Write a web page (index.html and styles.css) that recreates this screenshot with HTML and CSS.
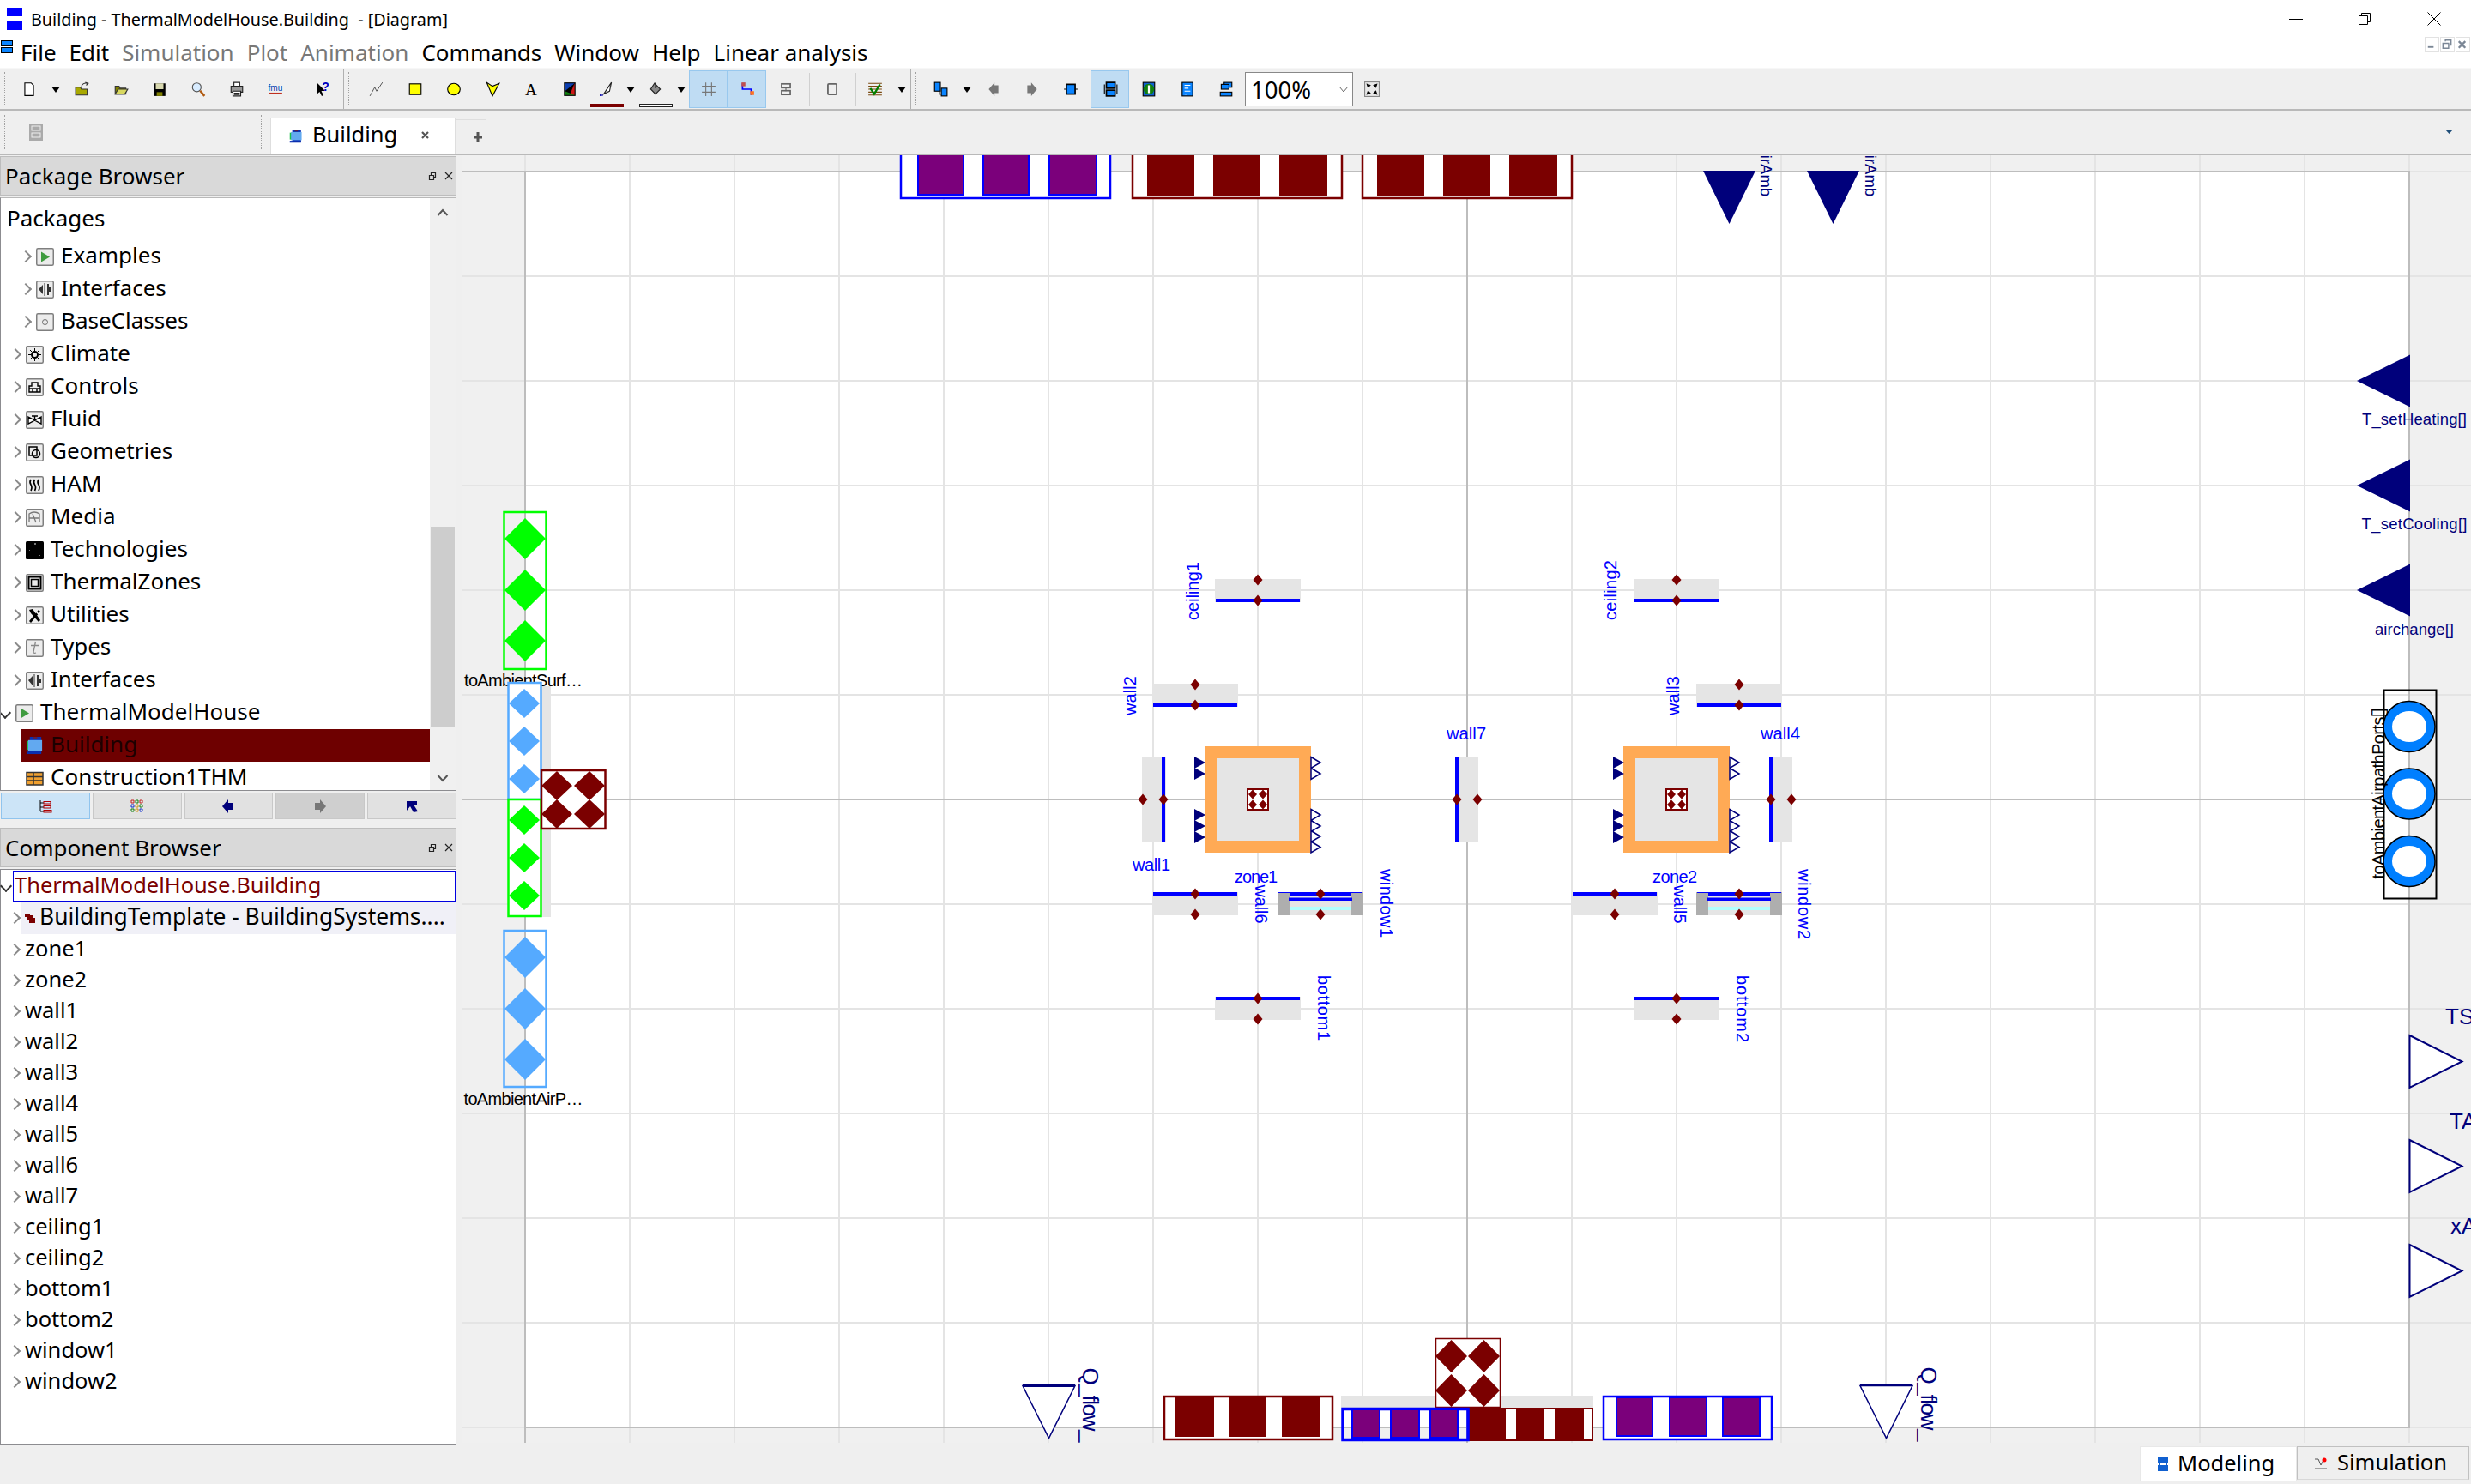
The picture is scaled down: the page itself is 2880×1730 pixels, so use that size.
FILE: index.html
```html
<!DOCTYPE html>
<html lang="en">
<head>
<meta charset="utf-8">
<title>Building - ThermalModelHouse.Building - [Diagram]</title>
<link rel="stylesheet" href="styles.css">
</head>
<body>
<svg class="defs" width="0" height="0" aria-hidden="true">
  <defs>
    <symbol id="t-box" viewBox="0 0 21 21"><rect x=".75" y=".75" width="19.5" height="19.5" rx="1.5" fill="#ececec" stroke="#7f7f7f" stroke-width="1.5"/></symbol>
    <symbol id="t-play" viewBox="0 0 21 21"><use href="#t-box"/><path d="M6 4.5 16 10.5 6 16.5Z" fill="#3f9b3f"/></symbol>
    <symbol id="t-iface" viewBox="0 0 21 21"><use href="#t-box"/><path d="M3 10 8 5V16ZM13 4H15V8H18V13H15V17H13Z" fill="#333"/><path d="M10 3V18" stroke="#333"/></symbol>
    <symbol id="t-base" viewBox="0 0 21 21"><use href="#t-box"/><circle cx="10.5" cy="10.5" r="3" fill="none" stroke="#666"/></symbol>
    <symbol id="t-climate" viewBox="0 0 21 21"><use href="#t-box"/><circle cx="10.5" cy="10.5" r="3.5" fill="none" stroke="#000" stroke-width="2"/><path d="M10.5 3V18M3 10.5H18M5 5 16 16M16 5 5 16" stroke="#000" stroke-dasharray="3 9"/></symbol>
    <symbol id="t-controls" viewBox="0 0 21 21"><use href="#t-box"/><path d="M7 5H14V9H17V16H4V9H7ZM4 12H17M8 12V16H13V12" fill="none" stroke="#000" stroke-width="1.4"/></symbol>
    <symbol id="t-fluid" viewBox="0 0 21 21"><use href="#t-box"/><path d="M3 7 10.500 11 3 15ZM18 7 10.500 11 18 15ZM10.500 11V6M7 6H14" fill="#fff" stroke="#000" stroke-width="1.4"/></symbol>
    <symbol id="t-geom" viewBox="0 0 21 21"><use href="#t-box"/><path d="M4 4H13V14H4Z" fill="none" stroke="#000" stroke-width="1.5"/><circle cx="12" cy="12" r="4.500" fill="none" stroke="#000" stroke-width="1.6"/></symbol>
    <symbol id="t-ham" viewBox="0 0 21 21"><use href="#t-box"/><path d="M6 4Q4 7 6 10T6 17M10.500 4Q8.500 7 10.500 10T10.500 17M15 4Q13 7 15 10T15 17" fill="none" stroke="#000" stroke-width="1.700"/></symbol>
    <symbol id="t-media" viewBox="0 0 21 21"><use href="#t-box"/><path d="M4 16V6Q10 2 16 6V16M4 11H16M8 6 12 16" fill="none" stroke="#777" stroke-width="1.300"/></symbol>
    <symbol id="t-tech" viewBox="0 0 21 21"><rect width="21" height="21" rx="1.500" fill="#000"/><path d="M10 2H12V4H10ZM4 10H5V11H4ZM16 16H17V17H16Z" fill="#777"/></symbol>
    <symbol id="t-thermal" viewBox="0 0 21 21"><use href="#t-box"/><path d="M3.500 3.500H17.500V17.500H3.500Z" fill="none" stroke="#000" stroke-width="2"/><path d="M6.500 6.500H14.500V14.500H6.500Z" fill="none" stroke="#000" stroke-width="1.500"/></symbol>
    <symbol id="t-util" viewBox="0 0 21 21"><use href="#t-box"/><path d="M4 17 15 4 17 6 6 19Z" fill="#000"/><path d="M4 4 8 3 17 16 15 18 6 8Z" fill="#000"/><path d="M12 6 15 9" stroke="#fff" stroke-width="1.500"/></symbol>
    <symbol id="t-type" viewBox="0 0 21 21"><use href="#t-box"/><path d="M11.500 3 9 15Q9 17 12 16M6 7.500H15" fill="none" stroke="#888" stroke-width="1.300"/></symbol>
    <symbol id="t-building" viewBox="0 0 22 22"><rect x="5" y="0" width="14" height="20" fill="#0b2fb0"/><rect x="1" y="5" width="4" height="11" fill="#1cc24a"/><rect x="3" y="4" width="17" height="13" fill="#62a9f0"/><rect x="9" y="0" width="5" height="3" fill="#5a1f4a"/><rect x="1" y="18" width="18" height="3" fill="#0b2fb0"/></symbol>
    <symbol id="t-table" viewBox="0 0 21 21"><path d="M1 3.500H20V18H1Z" fill="#f0a030" stroke="#333" stroke-width="1.500"/><path d="M1 8.500H20M1 13H20M9 4V18" stroke="#333" stroke-width="1.500"/></symbol>

    <polygon id="dm" points="0,-6.500 5.500,0 0,6.500 -5.500,0" fill="#7b0000"/>
    <g id="wall-top"><rect width="100" height="27" fill="#e5e5e5"/><rect x="1" y="23" width="98" height="4" fill="#0000ff"/><use href="#dm" x="50" y="1"/><use href="#dm" x="50" y="25"/></g>
    <g id="wall-bot"><rect width="100" height="27" fill="#e5e5e5"/><rect x="1" y="0" width="98" height="4" fill="#0000ff"/><use href="#dm" x="50" y="2"/><use href="#dm" x="50" y="26"/></g>
    <g id="wall-lft"><rect width="28" height="100" fill="#e5e5e5"/><rect x="23" y="1" width="4" height="98" fill="#0000ff"/><use href="#dm" x="1" y="50"/><use href="#dm" x="25" y="50"/></g>
    <g id="wall-rgt"><rect width="27" height="100" fill="#e5e5e5"/><rect x="0" y="1" width="4" height="98" fill="#0000ff"/><use href="#dm" x="2" y="50"/><use href="#dm" x="26" y="50"/></g>
    <g id="window"><rect width="100" height="27" fill="#e5e5e5"/><rect width="14" height="27" fill="#aeaeae"/><rect x="86" width="14" height="27" fill="#aeaeae"/><rect x="1" y="0" width="98" height="1" fill="#0000ff"/><rect x="14" y="0" width="72" height="4" fill="#0000ff"/><rect x="13" y="6.500" width="74" height="3.500" fill="#0000ff"/><rect x="14" y="17" width="72" height="4" fill="#b0ffff"/><use href="#dm" x="50" y="2"/><use href="#dm" x="50" y="26"/></g>
    <g id="zone">
      <rect width="124" height="124" fill="#ffaa55"/>
      <rect x="14" y="14" width="96" height="96" fill="#e5e5e5"/>
      <rect x="50" y="50" width="24" height="24" fill="#fff" stroke="#7b0000" stroke-width="2"/>
      <path d="M56 50.500 61 56 56 61.500 51 56ZM68 50.500 73 56 68 61.500 63 56ZM56 62.500 61 68 56 73.500 51 68ZM68 62.500 73 68 68 73.500 63 68Z" fill="#7b0000"/>
      <path d="M-12 12 1 19-12 26ZM-12 25 1 32-12 39ZM-12 73 1 80-12 87ZM-12 86 1 93-12 100ZM-12 99 1 106-12 113Z" fill="#00007b"/>
      <path d="M124 12.500 135 19 124 25.500ZM124 25.500 135 32 124 38.500ZM124 73.500 135 80 124 86.500ZM124 86.500 135 93 124 99.500ZM124 98.500 135 105 124 111.500ZM124 111 135 117.500 124 124Z" fill="#fff" stroke="#00007b" stroke-width="1.500"/>
    </g>
    <polygon id="dm-big" points="0,-24 24,0 0,24 -24,0"/>
    <polygon id="dm-mid" points="0,-17 18,0 0,17 -18,0"/>
    <polygon id="tri-out" points="0,0 61,30.500 0,61" fill="#fff" stroke="#00007b" stroke-width="2"/>
    <polygon id="tri-in" points="62,0 0,30.500 62,61" fill="#00007b"/>
    <polygon id="tri-dn" points="0,0 61,0 30.500,62" fill="#00007b"/>
    <polygon id="tri-dnh" points="0,0 61,0 30.500,61" fill="#fff" stroke="#00007b" stroke-width="1.500"/>
    <g id="port-ring"><ellipse rx="30" ry="29.500" fill="#007fff" stroke="#000" stroke-width="1.500"/><ellipse rx="20" ry="18" fill="#fff"/></g>
  </defs>
</svg>

<header class="titlebar">
  <svg class="app-icon" width="20" height="26" viewBox="0 0 20 26"><rect x="1" width="18" height="10" fill="#0000ff"/><rect x="1" y="16" width="18" height="10" fill="#0000ff"/></svg>
  <span class="title-text">Building - ThermalModelHouse.Building  - [Diagram]</span>
  <div class="caption">
    <svg width="16" height="16" viewBox="0 0 16 16"><path d="M0 8.500H16" stroke="#000"/></svg>
    <svg width="16" height="16" viewBox="0 0 16 16"><path d="M1.500 4.500H11.500V14.500H1.500ZM4.500 4.500V1.500H14.500V11.500H11.500" fill="none" stroke="#000"/></svg>
    <svg width="16" height="16" viewBox="0 0 16 16"><path d="M.5 .5 15.500 15.500M15.500 .5 .5 15.500" stroke="#000"/></svg>
  </div>
</header>

<nav class="menubar">
  <svg class="menu-icon" width="14" height="15" viewBox="0 0 14 15"><rect x=".5" y=".5" width="13" height="6" fill="#0a84ff" stroke="#000"/><rect x=".5" y="8.500" width="13" height="6" fill="#0a84ff" stroke="#000"/></svg>
  <ul class="menu">
    <li>File</li><li>Edit</li><li class="off">Simulation</li><li class="off">Plot</li><li class="off">Animation</li><li>Commands</li><li>Window</li><li>Help</li><li>Linear analysis</li>
  </ul>
  <div class="mdi">
    <span class="mdi-btn"><svg width="17" height="17" viewBox="0 0 17 17"><path d="M4 12H11" stroke="#7b8796" stroke-width="2"/></svg></span>
    <span class="mdi-btn"><svg width="17" height="17" viewBox="0 0 17 17"><path d="M3.500 7.500H10.500V13.500H3.500ZM6.500 5V3.500H13.500V9.500H11" fill="none" stroke="#7b8796" stroke-width="1.500"/></svg></span>
    <span class="mdi-btn"><svg width="17" height="17" viewBox="0 0 17 17"><path d="M4 5 12 13M12 5 4 13" stroke="#7b8796" stroke-width="2.500"/></svg></span>
  </div>
</nav>

<div class="toolbar">
  <div class="tb-group g1">
    <i class="grip"></i>
    <span class="tool"><svg class="ic" viewBox="0 0 16 16"><path d="M3.500 1.500H10L12.500 4V14.500H3.500Z" fill="#fff" stroke="#000"/></svg></span>
    <span class="tool arrow"><i class="down"></i></span>
    <span class="tool"><svg class="ic" viewBox="0 0 16 16"><path d="M1 6H6L7 8H13V14H1Z" fill="#a8a800" stroke="#333"/><path d="M7 5Q9 1 13 2M11 1 14 2 12 4" fill="none" stroke="#333"/></svg></span>
    <span class="tool"><svg class="ic" viewBox="0 0 16 16"><path d="M2 5H6L7 7H13V13H2Z" fill="#808000" stroke="#333"/><path d="M5 8H15L12 13H2Z" fill="#d8d860" stroke="#333"/></svg></span>
    <span class="tool"><svg class="ic" viewBox="0 0 16 16"><path d="M2 2H14V15H2Z" fill="#000"/><path d="M4 2H12V8H4Z" fill="#d8d8b0"/><path d="M5 11H11V15H5Z" fill="#808000"/></svg></span>
    <span class="tool"><svg class="ic" viewBox="0 0 16 16"><circle cx="6.500" cy="6" r="4.500" fill="#d8ecff" stroke="#555"/><path d="M10 9.500 14.500 15" stroke="#b05a10" stroke-width="2.200"/></svg></span>
    <span class="tool"><svg class="ic" viewBox="0 0 16 16"><path d="M5 1H11V5H5Z" fill="#fff" stroke="#222"/><path d="M2 5H14V11H2Z" fill="#999" stroke="#222"/><path d="M4 10H12V15H4Z" fill="#fff" stroke="#222"/><path d="M5 12H11M5 13.500H11" stroke="#222"/></svg></span>
    <span class="tool"><svg class="ic" viewBox="0 0 16 16"><text class="fmu" x="8" y="10">fmu</text><path d="M1 12H15" stroke="#c03020"/></svg></span>
    <i class="sep s-a"></i>
    <span class="tool"><svg class="ic" viewBox="0 0 18 18"><path d="M2 1V15L5.500 12 8 17 10 16 7.500 11H12Z" fill="#000"/><text class="qmark" x="12.500" y="11">?</text></svg></span>
  </div>
  <div class="tb-group g2">
    <i class="grip g-b"></i>
    <span class="tool"><svg class="ic" viewBox="0 0 16 16"><path d="M1 15 6 6 8 10 14 1" fill="none" stroke="#444" stroke-width=".8"/></svg></span>
    <span class="tool"><svg class="ic" viewBox="0 0 16 16"><rect x="2" y="2.500" width="12" height="11" fill="#ffff00" stroke="#000"/></svg></span>
    <span class="tool"><svg class="ic" viewBox="0 0 16 16"><ellipse cx="8" cy="8" rx="6.500" ry="6" fill="#ffff00" stroke="#000"/></svg></span>
    <span class="tool"><svg class="ic" viewBox="0 0 16 16"><path d="M2 1 8 5 15 2 8 15Z" fill="#ffff00" stroke="#000"/></svg></span>
    <span class="tool"><svg class="ic" viewBox="0 0 16 16"><text class="aglyph" x="8" y="14">A</text></svg></span>
    <span class="tool"><svg class="ic" viewBox="0 0 16 16"><path d="M2 1H14V15H2Z" fill="#000"/><path d="M3 2H13L3 10Z" fill="#0c3fb0"/><path d="M13 2V14H8Z" fill="#d01818"/><path d="M3 10 13 14H3Z" fill="#108010"/></svg></span>
    <span class="tool paint"><svg class="ic" viewBox="0 0 16 16"><path d="M5 13 9 7 13 1 11 10Z" fill="#fff" stroke="#222"/><path d="M1 14H2M3 14H4" stroke="#0000aa" stroke-width="2"/></svg><i class="swatch red"></i></span>
    <span class="tool arrow a-p"><i class="down"></i></span>
    <span class="tool paint"><svg class="ic" viewBox="0 0 16 16"><path d="M7 2 13 8 8 13 3 8Z" fill="#888" stroke="#222"/><path d="M8 1V7" stroke="#222"/></svg><i class="swatch white"></i></span>
    <span class="tool arrow a-f"><i class="down"></i></span>
    <span class="tool hl"><svg class="ic" viewBox="0 0 16 16"><path d="M5 1V15M11 1V15M1 5H15M1 11H15" stroke="#777"/></svg></span>
    <span class="tool hl"><svg class="ic" viewBox="0 0 16 16"><path d="M3 2V8H12V14" fill="none" stroke="#0000ff" stroke-width="1.500"/><rect x="2" y="1" width="4" height="4" fill="#c05050"/><rect x="11" y="10" width="4" height="4" fill="#ff7020"/></svg></span>
    <span class="tool"><svg class="ic" viewBox="0 0 16 16"><rect x="3.500" y="2.500" width="9" height="4" fill="none" stroke="#666" stroke-width="1.500"/><rect x="3.500" y="9.500" width="9" height="4" fill="none" stroke="#666" stroke-width="1.500"/><path d="M8 6V10" stroke="#666"/></svg></span>
    <i class="sep s-c"></i>
    <span class="tool"><svg class="ic" viewBox="0 0 16 16"><rect x="3.500" y="2.500" width="9" height="11" rx="1" fill="none" stroke="#666" stroke-width="1.600"/></svg></span>
    <i class="sep s-d"></i>
    <span class="tool t-check"><svg class="ic" viewBox="0 0 16 16"><path d="M1 2H15M1 5H15M1 8H15M1 11H15M1 14H15" stroke="#7a4a10"/><path d="M3 7 7 13 13 3" fill="none" stroke="#008000" stroke-width="2"/></svg></span>
    <span class="tool arrow"><i class="down"></i></span>
  </div>
  <div class="tb-group g3">
    <i class="grip g-c"></i>
    <span class="tool"><svg class="ic" viewBox="0 0 16 16"><rect x="2" y="1" width="6" height="9" fill="#0a84ff" stroke="#000"/><rect x="9" y="7" width="6" height="8" fill="#0a84ff" stroke="#000"/><path d="M7 13H9M7 10V13" stroke="#000"/></svg></span>
    <span class="tool arrow"><i class="down"></i></span>
    <span class="tool"><svg class="ic" viewBox="0 0 16 16"><path d="M9 1V4H13V12H9V15L3 8Z" fill="#777"/></svg></span>
    <span class="tool"><svg class="ic" viewBox="0 0 16 16"><path d="M7 1V4H3V12H7V15L13 8Z" fill="#777"/></svg></span>
    <span class="tool t-w"><svg class="ic" viewBox="0 0 16 16"><rect x="3.500" y="3" width="9" height="10" fill="#0a84ff" stroke="#000" stroke-width="1.500"/><path d="M1 8H3M13 8H15" stroke="#000"/></svg></span>
    <span class="tool hl"><svg class="ic" viewBox="0 0 16 16"><rect x="4" y="1" width="9" height="6" fill="#0a84ff" stroke="#000" stroke-width="1.500"/><rect x="4" y="9" width="9" height="6" fill="#0a84ff" stroke="#000" stroke-width="1.500"/><path d="M2 3V13M15 3V13" stroke="#000"/></svg></span>
    <span class="tool"><svg class="ic" viewBox="0 0 16 16"><rect x="2" y="1" width="12" height="14" fill="#1060d0" stroke="#000"/><circle cx="8" cy="8" r="5.500" fill="#108010"/><path d="M7 4H9V12H7Z" fill="#fff"/></svg></span>
    <span class="tool"><svg class="ic" viewBox="0 0 16 16"><rect x="2.500" y="1" width="11" height="14" fill="#0a84ff" stroke="#000"/><path d="M5 4H11M5 7H9M5 10H11M5 13H8" stroke="#fff"/></svg></span>
    <span class="tool"><svg class="ic" viewBox="0 0 16 16"><rect x="6" y="1" width="8" height="5" fill="#0a84ff" stroke="#000"/><rect x="3" y="3" width="8" height="5" fill="#0a84ff" stroke="#000"/><rect x="2" y="11" width="12" height="4" fill="#0a84ff" stroke="#000"/></svg></span>
    <div class="combo"><span>100%</span><svg width="12" height="8" viewBox="0 0 12 8"><path d="M1 1 6 7 11 1" fill="none" stroke="#666"/></svg></div>
    <span class="tool t-fit"><svg class="ic" viewBox="0 0 16 16"><rect x=".5" y=".5" width="15" height="15" fill="#e8e8e8" stroke="#888"/><path d="M3 3 6 4 4 6ZM13 3 10 4 12 6ZM3 13 6 12 4 10ZM13 13 10 12 12 10Z" fill="#000" stroke="#000"/></svg></span>
  </div>
</div>

<div class="tabbar">
  <div class="tab-lead">
    <i class="grip"></i>
    <svg class="lead-icon" width="16" height="20" viewBox="0 0 16 20"><rect x="0" y="0" width="16" height="20" fill="#aaa"/><rect x="3" y="3" width="10" height="5" fill="none" stroke="#eee"/><rect x="3" y="11" width="10" height="5" fill="none" stroke="#eee"/></svg>
  </div>
  <i class="grip g-t"></i>
  <div class="doc-tab">
    <svg width="16" height="22" viewBox="0 0 22 22"><use href="#t-building"/></svg>
    <span>Building</span>
    <svg class="tab-x" width="11" height="11" viewBox="0 0 11 11"><path d="M2 2 9 9M9 2 2 9" stroke="#555" stroke-width="2.200"/></svg>
  </div>
  <div class="plus-tab"><svg width="10" height="14" viewBox="0 0 10 14"><path d="M5 1V13M0 7H10" stroke="#555" stroke-width="3"/></svg></div>
  <svg class="tab-menu" width="9" height="5" viewBox="0 0 9 5"><path d="M0 0H9L4.500 5Z" fill="#1f4e79"/></svg>
</div>

<main class="workspace">
  <aside class="sidebar">
    <section class="panel pkg">
      <h2 class="panel-head">Package Browser
        <span class="panel-ctl"><svg width="10" height="12" viewBox="0 0 10 12"><path d="M1.500 5.500H6.500V10.500H1.500ZM3.500 5V2.500H8.500V7.500H7" fill="none" stroke="#222" stroke-width="1.200"/></svg><svg width="10" height="10" viewBox="0 0 10 10"><path d="M1 1 9 9M9 1 1 9" stroke="#222" stroke-width="1.200"/></svg></span>
      </h2>
      <div class="pkg-box">
        <div class="pkg-tree">
          <div class="tree-head">Packages</div>
          <ul class="tree">
            <li class="row l2"><i class="chev"></i><svg class="ti"><use href="#t-play"/></svg><span>Examples</span></li>
            <li class="row l2"><i class="chev"></i><svg class="ti"><use href="#t-iface"/></svg><span>Interfaces</span></li>
            <li class="row l2"><i class="chev"></i><svg class="ti"><use href="#t-base"/></svg><span>BaseClasses</span></li>
            <li class="row l1"><i class="chev"></i><svg class="ti"><use href="#t-climate"/></svg><span>Climate</span></li>
            <li class="row l1"><i class="chev"></i><svg class="ti"><use href="#t-controls"/></svg><span>Controls</span></li>
            <li class="row l1"><i class="chev"></i><svg class="ti"><use href="#t-fluid"/></svg><span>Fluid</span></li>
            <li class="row l1"><i class="chev"></i><svg class="ti"><use href="#t-geom"/></svg><span>Geometries</span></li>
            <li class="row l1"><i class="chev"></i><svg class="ti"><use href="#t-ham"/></svg><span>HAM</span></li>
            <li class="row l1"><i class="chev"></i><svg class="ti"><use href="#t-media"/></svg><span>Media</span></li>
            <li class="row l1"><i class="chev"></i><svg class="ti"><use href="#t-tech"/></svg><span>Technologies</span></li>
            <li class="row l1"><i class="chev"></i><svg class="ti"><use href="#t-thermal"/></svg><span>ThermalZones</span></li>
            <li class="row l1"><i class="chev"></i><svg class="ti"><use href="#t-util"/></svg><span>Utilities</span></li>
            <li class="row l1"><i class="chev"></i><svg class="ti"><use href="#t-type"/></svg><span>Types</span></li>
            <li class="row l1"><i class="chev"></i><svg class="ti"><use href="#t-iface"/></svg><span>Interfaces</span></li>
            <li class="row l0"><i class="chev open"></i><svg class="ti"><use href="#t-play"/></svg><span>ThermalModelHouse</span></li>
            <li class="row leaf selected"><svg class="ti"><use href="#t-building"/></svg><span>Building</span></li>
            <li class="row leaf"><svg class="ti"><use href="#t-table"/></svg><span>Construction1THM</span></li>
          </ul>
        </div>
        <div class="scroll">
          <svg width="14" height="9" viewBox="0 0 14 9"><path d="M1.500 8 7 2 12.500 8" fill="none" stroke="#555" stroke-width="2"/></svg>
          <i class="thumb"></i>
          <svg width="14" height="9" viewBox="0 0 14 9"><path d="M1.500 1 7 7 12.500 1" fill="none" stroke="#555" stroke-width="2"/></svg>
        </div>
      </div>
      <div class="browser-tabs">
        <span class="btab on"><svg width="16" height="16" viewBox="0 0 16 16"><path d="M2 1V14M2 4H6M2 9H6M2 14H6" fill="none" stroke="#000"/><rect x="6" y="2.500" width="8" height="2.500" fill="none" stroke="#b00000"/><rect x="6" y="7.500" width="8" height="2.500" fill="none" stroke="#b00000"/><rect x="6" y="12.500" width="9" height="2.500" fill="none" stroke="#b00000"/></svg></span>
        <span class="btab"><svg width="16" height="16" viewBox="0 0 16 16"><path d="M1 1H4V4H1ZM11 1H14V4H11Z" fill="none" stroke="#c02020"/><path d="M6 1H9V4H6ZM1 11H4V14H1Z" fill="none" stroke="#108010"/><path d="M1 6H4V9H1ZM11 11H14V14H11Z" fill="none" stroke="#1030d0"/><path d="M6 6H9V9H6ZM6 11H9V14H6Z" fill="none" stroke="#d09010"/><path d="M11 6H14V9H11Z" fill="none" stroke="#108010"/></svg></span>
        <span class="btab"><svg width="14" height="16" viewBox="0 0 14 16"><path d="M7 0V4H13V12H7V16L0 8Z" fill="#00007b"/></svg></span>
        <span class="btab dim"><svg width="14" height="16" viewBox="0 0 14 16"><path d="M7 0V4H1V12H7V16L14 8Z" fill="#777"/></svg></span>
        <span class="btab"><svg width="14" height="14" viewBox="0 0 14 14"><path d="M1 1H13V6L9 5 14 13 9 14 5 7 1 12Z" fill="#00007b"/></svg></span>
      </div>
    </section>
    <section class="panel comp">
      <h2 class="panel-head">Component Browser
        <span class="panel-ctl"><svg width="10" height="12" viewBox="0 0 10 12"><path d="M1.500 5.500H6.500V10.500H1.500ZM3.500 5V2.500H8.500V7.500H7" fill="none" stroke="#222" stroke-width="1.200"/></svg><svg width="10" height="10" viewBox="0 0 10 10"><path d="M1 1 9 9M9 1 1 9" stroke="#222" stroke-width="1.200"/></svg></span>
      </h2>
      <ul class="comp-tree">
        <li class="root"><i class="chev open"></i><span>ThermalModelHouse.Building</span></li>
        <li class="crow base"><i class="chev"></i><svg width="12" height="12" viewBox="0 0 12 12"><path d="M0 1H6V3H10V6H12V12H5V9H2V5H0Z" fill="#7b0000"/></svg><span>BuildingTemplate - BuildingSystems....</span></li>
        <li class="crow"><i class="chev"></i><span>zone1</span></li>
        <li class="crow"><i class="chev"></i><span>zone2</span></li>
        <li class="crow"><i class="chev"></i><span>wall1</span></li>
        <li class="crow"><i class="chev"></i><span>wall2</span></li>
        <li class="crow"><i class="chev"></i><span>wall3</span></li>
        <li class="crow"><i class="chev"></i><span>wall4</span></li>
        <li class="crow"><i class="chev"></i><span>wall5</span></li>
        <li class="crow"><i class="chev"></i><span>wall6</span></li>
        <li class="crow"><i class="chev"></i><span>wall7</span></li>
        <li class="crow"><i class="chev"></i><span>ceiling1</span></li>
        <li class="crow"><i class="chev"></i><span>ceiling2</span></li>
        <li class="crow"><i class="chev"></i><span>bottom1</span></li>
        <li class="crow"><i class="chev"></i><span>bottom2</span></li>
        <li class="crow"><i class="chev"></i><span>window1</span></li>
        <li class="crow"><i class="chev"></i><span>window2</span></li>
      </ul>
    </section>
  </aside>

  <div class="canvas">
    <svg class="diagram" viewBox="538 181 2342 1501" width="2342" height="1501">
      <rect class="bg-out" x="538" y="181" width="2342" height="1501"/>
      <rect class="bg-in" x="612" y="200" width="2196" height="1464"/>
      <path class="grid" d="M734 181V1682M856 181V1682M978 181V1682M1100 181V1682M1222 181V1682M1344 181V1682M1466 181V1682M1588 181V1682M1832 181V1682M1954 181V1682M2076 181V1682M2198 181V1682M2320 181V1682M2442 181V1682M2564 181V1682M2686 181V1682M612 181V200M2808 181V200M2808 1664V1682M538 322H2880M538 444H2880M538 566H2880M538 688H2880M538 810H2880M538 1054H2880M538 1176H2880M538 1298H2880M538 1420H2880M538 1542H2880M538 1664H612M2808 1664H2880M2808 200H2880"/>
      <path class="axis" d="M612 200V1682M1710 181V1682M538 932H2880M538 200H2808V1664H612"/>

      <!-- top connectors -->
      <rect class="frame-b" x="1050" y="120" width="244" height="111"/>
      <rect class="bar-p" x="1070" y="120" width="53" height="107"/><rect class="bar-p" x="1146" y="120" width="53" height="107"/><rect class="bar-p" x="1223" y="120" width="55" height="107"/>
      <rect class="frame-r" x="1320" y="120" width="244" height="111"/>
      <path class="fill-r" d="M1337 120H1392V228H1337ZM1414 120H1469V228H1414ZM1491 120H1547V228H1491Z"/>
      <rect class="frame-r" x="1588" y="120" width="244" height="111"/>
      <path class="fill-r" d="M1605 120H1660V228H1605ZM1682 120H1737V228H1682ZM1759 120H1815V228H1759Z"/>
      <use href="#tri-dn" x="1985" y="199"/><use href="#tri-dn" x="2106" y="199"/>
      <text class="navy l18 c" transform="translate(2058 205) rotate(90)">irAmb</text>
      <text class="navy l18 c" transform="translate(2180 205) rotate(90)">irAmb</text>

      <!-- zones and walls -->
      <use href="#zone" x="1404" y="870"/><use href="#zone" x="1892" y="870"/>
      <use href="#wall-top" x="1416" y="675"/><use href="#wall-top" x="1904" y="675"/>
      <use href="#wall-top" x="1343" y="797"/><use href="#wall-top" x="1977" y="797"/>
      <use href="#wall-bot" x="1343" y="1040"/><use href="#wall-bot" x="1832" y="1040"/>
      <use href="#wall-bot" x="1416" y="1162"/><use href="#wall-bot" x="1904" y="1162"/>
      <use href="#window" x="1489" y="1040"/><use href="#window" x="1977" y="1040"/>
      <use href="#wall-lft" x="1331" y="882"/>
      <use href="#wall-rgt" x="1696" y="882"/><use href="#wall-rgt" x="2062" y="882"/>

      <text class="blue c" textLength="68" transform="translate(1390 689) rotate(-90)">ceiling1</text>
      <text class="blue c" textLength="70" transform="translate(1877 688) rotate(-90)">ceiling2</text>
      <text class="blue c" textLength="46" transform="translate(1317 811) rotate(-90)">wall2</text>
      <text class="blue c" textLength="46" transform="translate(1950 811) rotate(-90)">wall3</text>
      <text class="blue c" textLength="44" x="1342" y="1008">wall1</text>
      <text class="blue c" textLength="46" x="1709" y="855">wall7</text>
      <text class="blue c" textLength="46" x="2075" y="855">wall4</text>
      <text class="blue c" textLength="50" x="1464" y="1022">zone1</text>
      <text class="blue c" textLength="52" x="1952" y="1022">zone2</text>
      <text class="blue c" textLength="45" transform="translate(1470 1054) rotate(90)">wall6</text>
      <text class="blue c" textLength="45" transform="translate(1958 1054) rotate(90)">wall5</text>
      <text class="blue c" textLength="80" transform="translate(1616 1053) rotate(90)">window1</text>
      <text class="blue c" textLength="82" transform="translate(2103 1054) rotate(90)">window2</text>
      <text class="blue c" textLength="76" transform="translate(1543 1175) rotate(90)">bottom1</text>
      <text class="blue c" textLength="78" transform="translate(2031 1176) rotate(90)">bottom2</text>

      <!-- left connectors -->
      <text class="black c" textLength="138" x="610" y="793">toAmbientSurf…</text>
      <text class="black c" textLength="139" x="610" y="1281">toAmbientAirP…</text>
      <rect class="shade" x="631" y="800" width="11" height="269"/>
      <rect class="frame-g" x="587.500" y="597" width="49" height="183"/>
      <g class="lime"><use href="#dm-big" x="612" y="628"/><use href="#dm-big" x="612" y="688"/><use href="#dm-big" x="612" y="747"/></g>
      <rect class="frame-sb" x="592.500" y="796" width="38" height="136"/>
      <g class="sky"><use href="#dm-mid" x="611" y="820"/><use href="#dm-mid" x="611" y="864"/><use href="#dm-mid" x="611" y="908"/></g>
      <rect class="frame-sg" x="592.500" y="932" width="38" height="136"/>
      <g class="lime"><use href="#dm-mid" x="611" y="956"/><use href="#dm-mid" x="611" y="1000"/><use href="#dm-mid" x="611" y="1044"/></g>
      <rect class="frame-dr" x="631" y="898" width="74.500" height="68"/>
      <g class="maroon"><use href="#dm-mid" x="649" y="916"/><use href="#dm-mid" x="687" y="916"/><use href="#dm-mid" x="649" y="949"/><use href="#dm-mid" x="687" y="949"/></g>
      <rect class="frame-b2" x="587.500" y="1085" width="49" height="182"/>
      <g class="sky"><use href="#dm-big" x="612" y="1116"/><use href="#dm-big" x="612" y="1176"/><use href="#dm-big" x="612" y="1235"/></g>

      <!-- right connectors -->
      <use href="#tri-in" x="2747" y="413.500"/><use href="#tri-in" x="2747" y="535.500"/><use href="#tri-in" x="2747" y="657.500"/>
      <text class="navy l18 c" textLength="122" x="2814" y="488">T_setHeating[]</text>
      <text class="navy l18 c" textLength="123" x="2814" y="610">T_setCooling[]</text>
      <text class="navy l18 c" textLength="92" x="2814" y="733">airchange[]</text>
      <rect class="frame-k" x="2778.500" y="804.500" width="61" height="243"/>
      <use href="#port-ring" x="2808" y="847"/><use href="#port-ring" x="2808" y="925.500"/><use href="#port-ring" x="2808" y="1004"/>
      <text class="black c" textLength="199" transform="translate(2772 925) rotate(-90)">toAmbientAirpathPorts[]</text>
      <use href="#tri-out" x="2808.500" y="1207"/><use href="#tri-out" x="2808.500" y="1329"/><use href="#tri-out" x="2808.500" y="1451"/>
      <text class="navy l26" x="2850" y="1194">TS</text>
      <text class="navy l26" x="2855" y="1316">TA</text>
      <text class="navy l26" x="2856" y="1438">xA</text>

      <!-- bottom connectors -->
      <use href="#tri-dnh" x="1192" y="1615.500"/><path class="navy-line" d="M1192 1615.500H1253M2168 1615.500H2229"/><use href="#tri-dnh" x="2168" y="1615.500"/>
      <text class="navy l26b c" textLength="87" transform="translate(1271 1638) rotate(90)">Q_flow_</text>
      <text class="navy l26b c" textLength="87" transform="translate(2248 1637) rotate(90)">Q_flow_</text>
      <rect class="frame-r" x="1357" y="1628" width="196" height="50"/>
      <path class="fill-r" d="M1370 1628H1415V1675H1370ZM1432 1628H1476V1675H1432ZM1494 1628H1538V1675H1494Z"/>
      <rect class="frame-b" x="1869" y="1628" width="196" height="50"/>
      <rect class="bar-p" x="1884" y="1629" width="42" height="45"/><rect class="bar-p" x="1946" y="1629" width="43" height="45"/><rect class="bar-p" x="2008" y="1629" width="43" height="45"/>
      <rect class="shade" x="1563" y="1627" width="294" height="14"/>
      <rect class="frame-thin" x="1673.500" y="1560.500" width="75" height="80"/>
      <path class="fill-r" d="M1691.500 1562 1710 1581 1691.500 1600 1673 1581ZM1729.500 1562 1748 1581 1729.500 1600 1711 1581ZM1691.500 1602 1710 1621 1691.500 1640 1673 1621ZM1729.500 1602 1748 1621 1729.500 1640 1711 1621Z"/>
      <rect class="frame-rs" x="1711" y="1642" width="145" height="37"/>
      <path class="fill-r" d="M1711 1642H1755V1679H1711ZM1767 1642H1800V1679H1767ZM1812 1642H1846V1679H1812Z"/>
      <rect class="frame-bs" x="1565" y="1642.500" width="146" height="36"/>
      <rect class="bar-p" x="1576" y="1643" width="32" height="33"/><rect class="bar-p" x="1621" y="1643" width="33" height="33"/><rect class="bar-p" x="1667" y="1643" width="32" height="33"/>
    </svg>
  </div>
</main>

<footer class="modebar">
  <div class="mode on"><svg width="14" height="18" viewBox="0 0 14 18"><rect x="1" width="12" height="7" fill="#1060d0"/><rect x="1" y="10" width="12" height="7" fill="#1060d0"/><path d="M3 7V10M11 7V10" stroke="#1060d0" stroke-width="2"/></svg><span>Modeling</span></div>
  <div class="mode"><svg width="16" height="16" viewBox="0 0 16 16"><path d="M1 3 5 3 8 10 11 4" fill="none" stroke="#555"/><path d="M1 14H15" stroke="#555"/><circle cx="12" cy="4" r="2.500" fill="#ff0000"/></svg><span>Simulation</span></div>
</footer>
</body>
</html>
```

FILE: styles.css
```css
* { box-sizing: border-box; }
html, body { margin: 0; padding: 0; }
body {
  width: 2880px;
  height: 1730px;
  overflow: hidden;
  background: #efefef;
  color: #000;
  font-family: "Noto Sans", Tahoma, sans-serif;
  font-size: 25.5px;
  display: flex;
  flex-direction: column;
}
.defs { position: absolute; }
ul { list-style: none; margin: 0; padding: 0; }
i { display: block; font-style: normal; }

/* window chrome */
.titlebar { height: 41px; padding: 3px 0 0 7px; display: flex; align-items: center; background: #fff; }
.app-icon { margin-right: 9px; }
.title-text { font-size: 19.8px; white-space: pre; }
.caption { margin-left: auto; display: flex; margin-right: 3px; }
.caption svg { width: 16px; margin: 0 32px; }
.caption svg:last-child { margin-left: 33px; }

.menubar { height: 38px; background: #fff; display: flex; padding-top: 2px; align-items: center; }
.menu-icon { align-self: flex-start; margin: 4px 0 0 1px; }
.menu { display: flex; gap: 15px; margin-left: 9px; font-size: 26px; }
.off { color: #787878; }
.mdi { margin-left: auto; align-self: flex-start; display: flex; gap: 1px; padding-right: 1px; }
.mdi-btn { width: 17px; height: 18px; border: 1px solid #e2e2e2; display: flex; }
.mdi-btn svg { margin: -1px 0 0 -1px; }

/* toolbars */
.toolbar { height: 50px; border-top: 2px solid #f7f7f7; border-bottom: 2px solid #b9b9b9; background: #efefef; display: flex; }
.tb-group { display: flex; align-items: center; height: 100%; }
.g1, .g2 { border-right: 1px solid #b0b0b0; padding-right: 2px; }
.grip { width: 1px; height: 40px; margin: 0 5px; border-left: 1px dotted #a0a0a0; }
.g-b { margin: 0 9px 0 5px; }
.g-c { margin: 0 5px 0 5px; }
.tool { width: 45px; height: 44px; display: flex; flex-direction: column; align-items: center; justify-content: center; flex: none; }
.ic { width: 18px; height: 18px; }
.arrow { width: 17px; }
.a-p { width: 16px; }
.a-f { width: 19px; }
.t-check { width: 44px; }
.t-w { width: 46px; }
.t-fit { width: 44px; }
.down { width: 0; height: 0; border: 5px solid transparent; border-top: 7px solid #000; border-bottom: 0; }
.sep { width: 1px; height: 38px; background: #d0d0d0; }
.s-a { margin: 0 4px 0 5px; }
.s-c { margin: 0 3px 0 5px; }
.s-d { margin: 0 0 0 5px; }
.paint { width: 41px; position: relative; }
.swatch { position: absolute; left: 2px; bottom: 1px; width: 39px; height: 4px; }
.red { background: #7b0000; }
.white { background: #fff; border: 1px solid #222; }
.hl { background: #bfdcf3; border: 1px solid #98c8ee; }
.combo { width: 126px; height: 40px; margin-top: 0; background: #fff; border: 1px solid #888; display: flex; align-items: center; justify-content: space-between; padding: 0 4px 0 6px; font-size: 27.5px; flex: none; }
.fmu { font: 9px "Liberation Sans", sans-serif; fill: #0a3fb0; text-anchor: middle; }
.qmark { font: bold 14px "Liberation Sans", sans-serif; fill: #0000c0; text-anchor: middle; }
.aglyph { font: 17px "Liberation Serif", serif; text-anchor: middle; }

.tabbar { height: 52px; border-bottom: 2px solid #b9b9b9; background: #efefef; display: flex; align-items: flex-end; position: relative; }
.tab-lead { width: 300px; height: 50px; display: flex; align-items: center; border-right: 1px solid #ddd; }
.tab-lead .grip { margin: 0 0 0 5px; }
.lead-icon { margin-left: 28px; }
.g-t { align-self: center; margin: 0 10px 0 4px; }
.doc-tab { width: 216px; height: 42px; background: #fff; border: 1px solid #dedede; border-bottom: 0; display: flex; align-items: center; padding-left: 21px; font-size: 25.5px; }
.doc-tab span { margin-left: 11px; padding-bottom: 5px; }
.tab-x { margin-left: 27px; margin-bottom: 3px; }
.plus-tab { width: 36px; height: 40px; border: 1px solid #dedede; border-left: 0; border-bottom: 0; display: flex; align-items: center; justify-content: flex-end; padding-right: 4px; }
.tab-menu { position: absolute; left: 2850px; top: 22px; }

/* workspace */
.workspace { height: 1505px; display: flex; }
.sidebar { width: 538px; flex: none; padding-right: 6px; display: flex; flex-direction: column; }
.panel-head { margin: 0; height: 46px; padding: 0 0 1px 5px; background: #d9d9d9; border: 1px solid #bdbdbd; font-size: 26px; font-weight: 400; display: flex; align-items: center; justify-content: space-between; }
.panel-ctl { display: flex; align-items: center; gap: 9px; padding-right: 3px; }
.pkg { margin-top: 1px; }
.pkg-box { margin-top: 2px; height: 692px; border: 1px solid #8c8c90; border-top-color: #b9b9b9; background: #fff; display: flex; overflow: hidden; }
.pkg-tree { width: 500px; flex: none; overflow: hidden; }
.tree-head { height: 49px; line-height: 47px; padding-left: 7px; font-size: 26px; }
.row { height: 38px; display: flex; align-items: center; white-space: nowrap; font-size: 26px; }
.chev { width: 10px; height: 10px; border-top: 2.5px solid #8a8a8a; border-right: 2.5px solid #8a8a8a; transform: rotate(45deg); flex: none; }
.chev.open { transform: rotate(135deg); border-color: #333; }
.ti { width: 21px; height: 21px; flex: none; }
.row span { margin-left: 8px; padding-bottom: 4px; }
.l2 { padding-left: 23px; }
.l1 { padding-left: 11px; }
.l0 { padding-left: 0; }
.l2 .chev, .l1 .chev, .l0 .chev { margin-left: 1px; margin-right: 7px; }
.l1 .chev { margin-right: 7px; }
.l0 .chev { margin-left: 0; margin-right: 7px; }
.leaf { margin-left: 24px; padding-left: 5px; }
.selected { background: #6e0000; color: #1c0000; }
.scroll { flex: 1; background: #f0f0f0; display: flex; flex-direction: column; align-items: center; padding-top: 12px; padding-bottom: 9px; justify-content: space-between; position: relative; }
.thumb { position: absolute; left: 1px; right: 1px; top: 383px; height: 234px; background: #cdcdcd; }
.browser-tabs { margin-top: 2px; height: 31px; display: flex; gap: 3px; padding-left: 1px; }
.btab { width: 104px; background: #e1e1e1; border: 1px solid #c8c8c8; display: flex; align-items: center; justify-content: center; }
.btab.on { background: #cce4f7; border-color: #90c4ee; }
.btab.dim { background: #cfcfcf; }
.comp { margin-top: 10px; flex: 1; display: flex; flex-direction: column; }
.comp-tree { margin-top: 2px; height: 671px; border: 1px solid #8c8c90; background: #fff; padding-top: 1px; flex: none; }
.root { height: 36px; display: flex; align-items: center; color: #7b0000; margin-left: 0; position: relative; }
.root .chev { margin-left: 1px; margin-right: 2px; }
.root span { flex: 1; margin-left: 1px; height: 36px; line-height: 31px; padding-left: 1px; border: 1px solid #0000e0; }
.crow { height: 36px; display: flex; align-items: center; padding-left: 11px; white-space: nowrap; }
.crow .chev { margin-right: 7px; }
.crow span { padding-bottom: 4px; }
.base { height: 38px; background: linear-gradient(#f0f0f7, #f0f0f7) no-repeat 24px 0; font-size: 26.4px; }
.base svg { margin: 0 5px 0 0; flex: none; }

/* diagram */
.canvas { flex: 1; height: 100%; }
.diagram { display: block; }
.bg-out { fill: #f0f0f0; }
.bg-in { fill: #fff; }
.grid { fill: none; stroke: #e4e4e4; stroke-width: 2; }
.axis { fill: none; stroke: #bdbdbd; stroke-width: 2; }
.diagram text { font-family: "Liberation Sans", Arial, sans-serif; font-size: 20px; }
.c { text-anchor: middle; dominant-baseline: central; }
.blue { fill: #0000ff; }
.black { fill: #000; }
.diagram .navy { fill: #00007b; }
.diagram .l18 { font-size: 18.500px; }
.diagram .l26 { font-size: 26px; }
.diagram .l26b { font-size: 26px; }
.navy-line { stroke: #00007b; stroke-width: 3; fill: none; }
.frame-b { fill: #fff; stroke: #0000ff; stroke-width: 2.500; }
.frame-r { fill: #fff; stroke: #7b0000; stroke-width: 2.500; }
.frame-thin { fill: #fff; stroke: #7b0000; stroke-width: 1.500; }
.bar-p { fill: #7b007b; stroke: #0000ff; stroke-width: 2; }
.fill-r { fill: #7b0000; }
.shade { fill: #e5e5e5; }
.frame-g { fill: none; stroke: #00ff00; stroke-width: 2.500; }
.frame-sg { fill: #fff; stroke: #00ff00; stroke-width: 2.500; }
.frame-sb { fill: #fff; stroke: #55aaff; stroke-width: 2.500; }
.frame-b2 { fill: none; stroke: #55aaff; stroke-width: 2.500; }
.frame-dr { fill: #fff; stroke: #7b0000; stroke-width: 2.500; }
.frame-k { fill: none; stroke: #000; stroke-width: 2; }
.frame-rs { fill: #fff; stroke: #7b0000; stroke-width: 2; }
.frame-bs { fill: none; stroke: #0000ff; stroke-width: 3.500; }
.lime { fill: #00ff00; }
.sky { fill: #55aaff; }
.maroon { fill: #7b0000; }

/* bottom mode bar */
.modebar { height: 44px; display: flex; justify-content: flex-end; padding-right: 2px; }
.mode { width: 201px; height: 39px; border: 1px solid #c0c0c0; border-bottom: 1px solid #d8d8d8; background: #efefef; display: flex; align-items: center; padding-left: 19px; gap: 11px; font-size: 25.5px; }
.mode span { padding-bottom: 3px; }
.mode.on { width: 183px; height: 41px; background: #fff; padding-left: 19px; border-color: #e8e8e8; gap: 10px; }
```
